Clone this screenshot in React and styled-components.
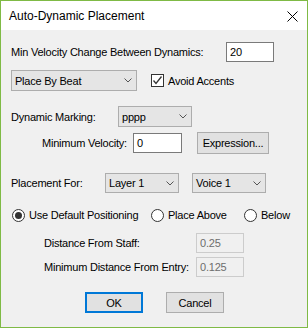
import React from "react";
import styled, { createGlobalStyle } from "styled-components";

const Global = createGlobalStyle`
  html, body { margin: 0; padding: 0; background: #f0f0f0; }
  * { box-sizing: border-box; }
`;

const Window = styled.div`
  width: 308px;
  height: 328px;
  border: 1px solid #7fba45;
  background: #f0f0f0;
  display: flex;
  flex-direction: column;
  font-family: "Liberation Sans", Arial, sans-serif;
  font-size: 11px;
  letter-spacing: -0.22px;
  color: #000;
  overflow: hidden;
`;

const TitleBar = styled.div`
  height: 29px;
  background: #fff;
  display: flex;
  align-items: center;
  justify-content: space-between;
  padding: 0 9px 0 8px;
  flex-shrink: 0;
`;

const Title = styled.span`
  font-size: 12px;
  letter-spacing: 0;
  padding-top: 1px;
`;

const CloseIcon = styled.svg`
  width: 11px;
  height: 11px;
  margin-top: 2px;
`;

const Body = styled.div`
  flex: 1;
  display: flex;
  flex-direction: column;
  padding-left: 10px;
`;

const Row = styled.div`
  display: flex;
  align-items: center;
  margin-top: ${(p) => p.$mt || 0}px;
  padding-left: ${(p) => p.$pl || 0}px;
  height: ${(p) => p.$h || 20}px;
`;

const Label = styled.span`
  width: ${(p) => p.$w}px;
  flex-shrink: 0;
  white-space: nowrap;
`;

const TextBox = styled.div`
  width: ${(p) => p.$w}px;
  height: ${(p) => p.$h || 20}px;
  border: 1px solid ${(p) => (p.$disabled ? "#cccccc" : "#7a7a7a")};
  background: ${(p) => (p.$disabled ? "#f0f0f0" : "#ffffff")};
  color: ${(p) => (p.$disabled ? "#6d6d6d" : "#000")};
  display: flex;
  align-items: center;
  padding-left: 3px;
  flex-shrink: 0;
`;

const Select = styled.div`
  width: ${(p) => p.$w}px;
  height: ${(p) => p.$h || 21}px;
  border: 1px solid #adadad;
  background: #e5e5e5;
  display: flex;
  align-items: center;
  justify-content: space-between;
  padding: 0 4px 0 3px;
  flex-shrink: 0;
  margin-left: ${(p) => p.$ml || 0}px;
`;

const Chevron = () => (
  <svg width="8" height="5" viewBox="0 0 8 5">
    <path d="M0.5 0.5 L4 4 L7.5 0.5" fill="none" stroke="#555" strokeWidth="1" />
  </svg>
);

const Button = styled.div`
  width: ${(p) => p.$w}px;
  height: ${(p) => p.$h || 21}px;
  border: ${(p) => (p.$default ? "2px solid #0078d7" : "1px solid #adadad")};
  background: #e1e1e1;
  display: flex;
  align-items: center;
  justify-content: center;
  margin-left: ${(p) => p.$ml || 0}px;
  flex-shrink: 0;
`;

const CheckWrap = styled.label`
  display: flex;
  align-items: center;
  gap: 4px;
  margin-left: ${(p) => p.$ml || 0}px;
`;

const Box = styled.span`
  width: 13px;
  height: 13px;
  border: 1px solid #333;
  background: #fff;
  display: flex;
  align-items: center;
  justify-content: center;
`;

const RadioItem = styled.label`
  display: flex;
  align-items: center;
  gap: 4px;
  width: ${(p) => (p.$w ? `${p.$w}px` : "auto")};
  flex-shrink: 0;
`;

const Circle = styled.span`
  width: 13px;
  height: 13px;
  border-radius: 50%;
  border: 1px solid #333;
  background: #fff;
  display: flex;
  align-items: center;
  justify-content: center;
  &::after {
    content: "";
    width: 7px;
    height: 7px;
    border-radius: 50%;
    background: ${(p) => (p.$on ? "#333" : "transparent")};
  }
`;

export default function App() {
  return (
    <>
      <Global />
      <Window>
        <TitleBar>
          <Title>Auto-Dynamic Placement</Title>
          <CloseIcon viewBox="0 0 11 11">
            <path d="M0.5 0.5 L10.5 10.5 M10.5 0.5 L0.5 10.5" stroke="#000" strokeWidth="1" />
          </CloseIcon>
        </TitleBar>
        <Body>
          <Row $mt={12} $h={20}>
            <Label $w={215}>Min Velocity Change Between Dynamics:</Label>
            <TextBox $w={48}>20</TextBox>
          </Row>
          <Row $mt={8} $h={21}>
            <Select $w={126}>
              <span>Place By Beat</span>
              <Chevron />
            </Select>
            <CheckWrap $ml={14}>
              <Box>
                <svg width="11" height="11" viewBox="0 0 11 11">
                  <path d="M1.5 5.5 L4 8.5 L9.5 1.5" fill="none" stroke="#333" strokeWidth="1.3" />
                </svg>
              </Box>
              <span>Avoid Accents</span>
            </CheckWrap>
          </Row>
          <Row $mt={15} $h={21}>
            <Label $w={107}>Dynamic Marking:</Label>
            <Select $w={74}>
              <span>pppp</span>
              <Chevron />
            </Select>
          </Row>
          <Row $mt={5} $h={22} $pl={31}>
            <Label $w={91}>Minimum Velocity:</Label>
            <TextBox $w={49}>0</TextBox>
            <Button $w={72} $h={22} $ml={15}>Expression...</Button>
          </Row>
          <Row $mt={19} $h={20}>
            <Label $w={94}>Placement For:</Label>
            <Select $w={74} $h={20}>
              <span>Layer 1</span>
              <Chevron />
            </Select>
            <Select $w={74} $h={20} $ml={13}>
              <span>Voice 1</span>
              <Chevron />
            </Select>
          </Row>
          <Row $mt={14} $h={16} $pl={1}>
            <RadioItem $w={139}>
              <Circle $on />
              <span>Use Default Positioning</span>
            </RadioItem>
            <RadioItem $w={93}>
              <Circle />
              <span>Place Above</span>
            </RadioItem>
            <RadioItem>
              <Circle />
              <span>Below</span>
            </RadioItem>
          </Row>
          <Row $mt={10} $h={20} $pl={33}>
            <Label $w={152}>Distance From Staff:</Label>
            <TextBox $w={48} $disabled>0.25</TextBox>
          </Row>
          <Row $mt={4} $h={20} $pl={33}>
            <Label $w={152}>Minimum Distance From Entry:</Label>
            <TextBox $w={48} $disabled>0.125</TextBox>
          </Row>
          <Row $mt={15} $h={21}>
            <Button $w={58} $default $ml={74}>OK</Button>
            <Button $w={58} $ml={23}>Cancel</Button>
          </Row>
        </Body>
      </Window>
    </>
  );
}
